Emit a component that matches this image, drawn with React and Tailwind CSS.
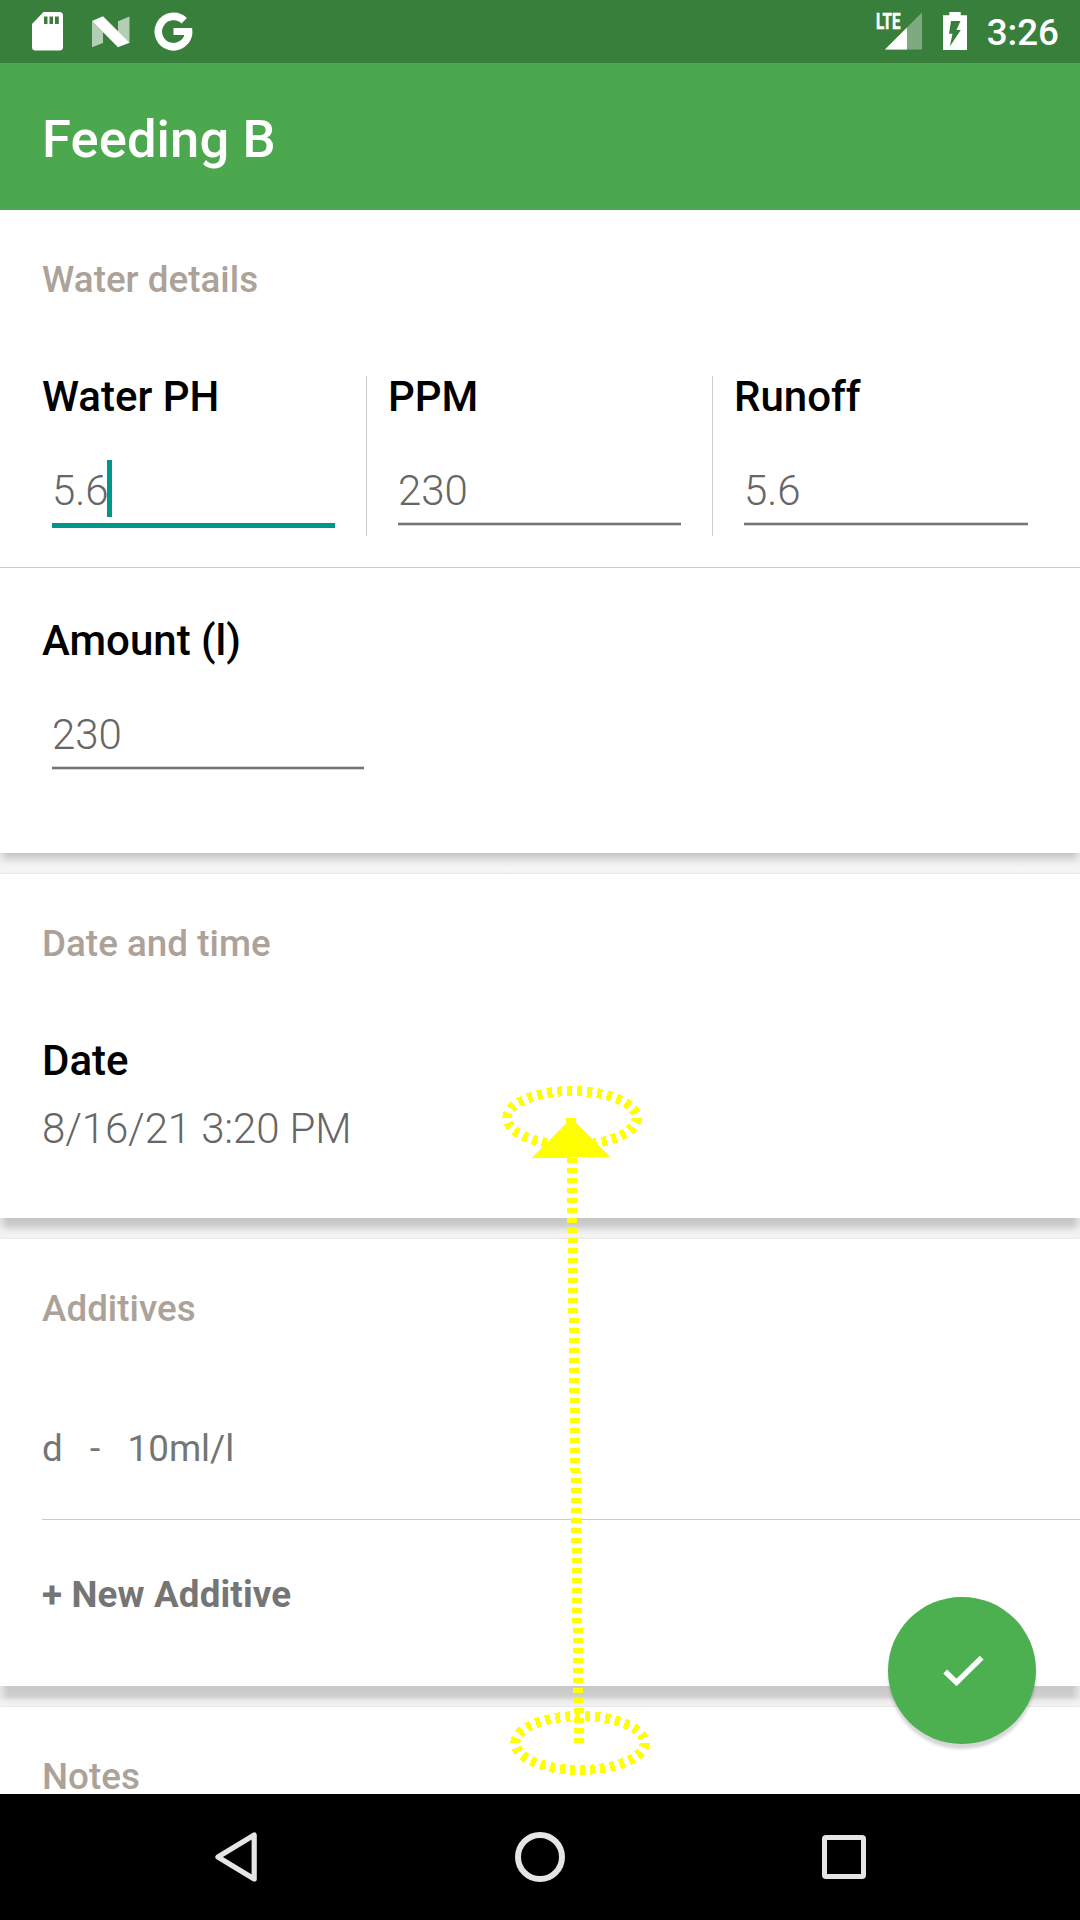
const SectionTitle = ({ children }) => (
  <h2 className="pt-[53px] pl-[42px] text-[36.75px] leading-[34px] font-medium tracking-[0.03px] text-[#aca299]">{children}</h2>
);

const Label = ({ children }) => (
  <div className="text-[42px] leading-[50px] font-medium text-black">{children}</div>
);

function Field({ label, value, focused, className }) {
  return (
    <div className={className}>
      <Label>{label}</Label>
      <div className="mt-[38px] ml-[10px] flex h-[57px] items-center text-[42px] font-light leading-[50px] tracking-[-0.1px] text-[#666]">
        <span className="relative top-[2px]">{value}</span>
        {focused && <span className="-ml-px h-[57px] w-[5px] bg-[#009688]" />}
      </div>
      {focused ? (
        <div className="mt-[6px] mr-[10px] ml-[10px] h-[5px] bg-[#009688]" />
      ) : (
        <div className="mt-[5px] mr-[10px] ml-[10px] h-[4px] border-y border-[#d5d5d5] bg-[#757575]" />
      )}
    </div>
  );
}

const ColumnDivider = () => <div className="mx-[21px] mt-[4px] h-[160px] w-px bg-[#ccc]" />;

// Strip between two cards, holding the upper card's shadow.
const Gap = ({ shade }) => (
  <div className="h-[21px] shrink-0 bg-[#f2f2f2]">
    <div
      className={
        "h-full border-b border-[#e8e8e8] [mask-image:linear-gradient(to_right,rgba(0,0,0,.3),black_8px,black_1072px,rgba(0,0,0,.3))] " +
        shade
      }
    />
  </div>
);

function StatusBar() {
  return (
    <div className="flex h-[63px] shrink-0 items-center justify-between bg-[#387f3b] pr-[21px] pl-[32px] text-white">
      <div className="flex items-center">
        <svg width="31" height="39" viewBox="0 0 31 39" fill="white">
          <path
            fillRule="evenodd"
            d="M11.500 0H27.500Q31 0 31 3.500V35Q31 38.500 27.500 38.500H3.500Q0 38.500 0 35V12Z M12 4.500V12H15.500V4.500Z M17.500 4.500V12H21V4.500Z M23 4.500V12H26.800V4.500Z"
          />
        </svg>
        <svg className="ml-[28px]" width="39" height="32" viewBox="0 0 39 32" fill="white">
          <path d="M1 5L12 16V27L1 31.300Z" opacity=".62" />
          <path d="M27 5.300L38.500 .500V27L27 16Z" opacity=".62" />
          <path d="M1 5L12 .300L38.500 26.700L27 31.300Z" />
        </svg>
        <svg className="ml-[24px]" width="39" height="39" viewBox="0 0 39 39">
          <path d="M30.200 8.800A15.200 15.200 0 1 0 34.700 19.500" fill="none" stroke="white" strokeWidth="7.600" />
          <path d="M19.500 16H38.200V20L33 23H19.500Z" fill="white" />
        </svg>
      </div>
      <div className="relative -top-px flex items-center">
        <svg className="overflow-visible" width="46" height="38" viewBox="0 0 46 38" fill="white">
          <path d="M9 37.500L46 .500V37.500Z" opacity=".35" />
          <path d="M9 37.500L31 15.500V37.500Z" />
          <rect x="0" y="0" width="25" height="17" fill="#387f3b" />
          <text x="0" y="16.600" fontSize="22" fontWeight="700" stroke="white" strokeWidth="0.500" fontFamily="Roboto, sans-serif" textLength="24.500" lengthAdjust="spacingAndGlyphs">LTE</text>
        </svg>
        <svg className="ml-[21px]" width="24" height="38" viewBox="0 0 24 38" fill="white">
          <path
            fillRule="evenodd"
            d="M6.300 0H17.700V3.300H24V38H0V3.300H6.300Z M8 9H17.500L13.500 18H17.800L6.800 34.500L9.500 21.700H6Z"
          />
        </svg>
        <span className="relative top-[2px] ml-[20px] text-[36.75px] leading-[44px] font-medium">3:26</span>
      </div>
    </div>
  );
}

// Dashed swipe trace: start ellipse, path and arrow head.
const SwipeTrace = () => (
  <svg className="absolute top-[1080px] left-[490px]" width="170" height="702" viewBox="490 1080 170 702" shapeRendering="crispEdges">
    <g fill="none" stroke="#ff0" strokeWidth="10" strokeDasharray="5 5">
      <ellipse cx="572" cy="1118" rx="64.700" ry="27" />
      <ellipse cx="580" cy="1743" rx="64.700" ry="27" />
      <path d="M571 1118L579 1743" />
    </g>
    <path d="M571 1118L532 1158L610 1157Z" fill="#ff0" />
  </svg>
);

function NavBar() {
  return (
    <div className="flex h-[126px] shrink-0 items-center bg-black pl-[215px]">
      <svg width="43" height="50" viewBox="0 0 43 50" fill="none" stroke="#e5e5e5" strokeWidth="5.200" strokeLinejoin="round">
        <path d="M2.900 25L39.200 3V47Z" />
      </svg>
      <div className="ml-[257px] h-[50px] w-[50px] rounded-full border-[6px] border-[#e5e5e5]" />
      <div className="ml-[257px] h-[44px] w-[44px] rounded-[4px] border-[5px] border-[#e5e5e5]" />
    </div>
  );
}

export default function App() {
  return (
    <div className="relative flex h-[1920px] w-[1080px] flex-col overflow-hidden bg-white font-[Roboto,sans-serif]">
      <StatusBar />
      <header className="flex h-[147px] shrink-0 items-center bg-[#4ba84e] pt-[5px] pl-[42px]">
        <h1 className="text-[52.5px] leading-[62px] font-medium tracking-[0.1px] text-white">Feeding B</h1>
      </header>

      <main className="flex h-[1584px] shrink-0 flex-col">
        <section className="h-[643px] shrink-0 bg-white">
          <SectionTitle>Water details</SectionTitle>
          <div className="mt-[75px] flex h-[196px] border-b border-[#ccc] pl-[42px]">
            <Field className="w-[303px]" label="Water PH" value="5.6" focused />
            <ColumnDivider />
            <Field className="w-[303px]" label="PPM" value="230" />
            <ColumnDivider />
            <Field className="w-[304px]" label="Runoff" value="5.6" />
          </div>
          <Field className="mt-[48px] ml-[42px] w-[332px]" label="Amount (l)" value="230" />
        </section>
        <Gap shade="bg-[linear-gradient(#c3c5c4,#d8d8d8_5px,#f0f0f0_11px,#f6f6f6_17px,#f2f2f2)]" />

        <section className="h-[344px] shrink-0 bg-white">
          <SectionTitle>Date and time</SectionTitle>
          <div className="mt-[75px] ml-[42px]">
            <Label>Date</Label>
            <div className="mt-[18px] text-[42px] leading-[50px] font-light tracking-[-0.12px] text-[#666]">8/16/21 3:20 PM</div>
          </div>
        </section>
        <Gap shade="bg-[linear-gradient(#c4c4c4,#cecece_7px,#ebebeb_13px,#f5f5f5_18px,#f0f0f0)]" />

        <section className="h-[447px] shrink-0 bg-white text-[36.75px] leading-[44px] text-[#757575]">
          <SectionTitle>Additives</SectionTitle>
          <div className="mt-[100px] ml-[42px] h-[94px] border-b border-[#ccc] pt-px whitespace-pre">d   -   10ml/l</div>
          <div className="mt-[53px] ml-[42px] font-bold tracking-[0.15px]">+ New Additive</div>
        </section>
        <Gap shade="bg-[linear-gradient(#c8c8c8,#cfcfcf_10px,#ebebeb_15px,#f2f2f2_19px,#eee)]" />

        <section className="bg-white">
          <SectionTitle>Notes</SectionTitle>
        </section>
      </main>

      <NavBar />

      <button className="absolute top-[1597px] left-[888px] flex h-[147px] w-[147.5px] items-center justify-center rounded-full bg-[#4caf50] shadow-[0_5px_3px_rgba(0,0,0,0.16)]">
        <svg width="147" height="147" viewBox="0 0 147 147" fill="none" stroke="white" strokeWidth="5.400">
          <path d="M57.200 74.500L68.500 85.500L93.700 60.700" />
        </svg>
      </button>

      <SwipeTrace />
    </div>
  );
}
